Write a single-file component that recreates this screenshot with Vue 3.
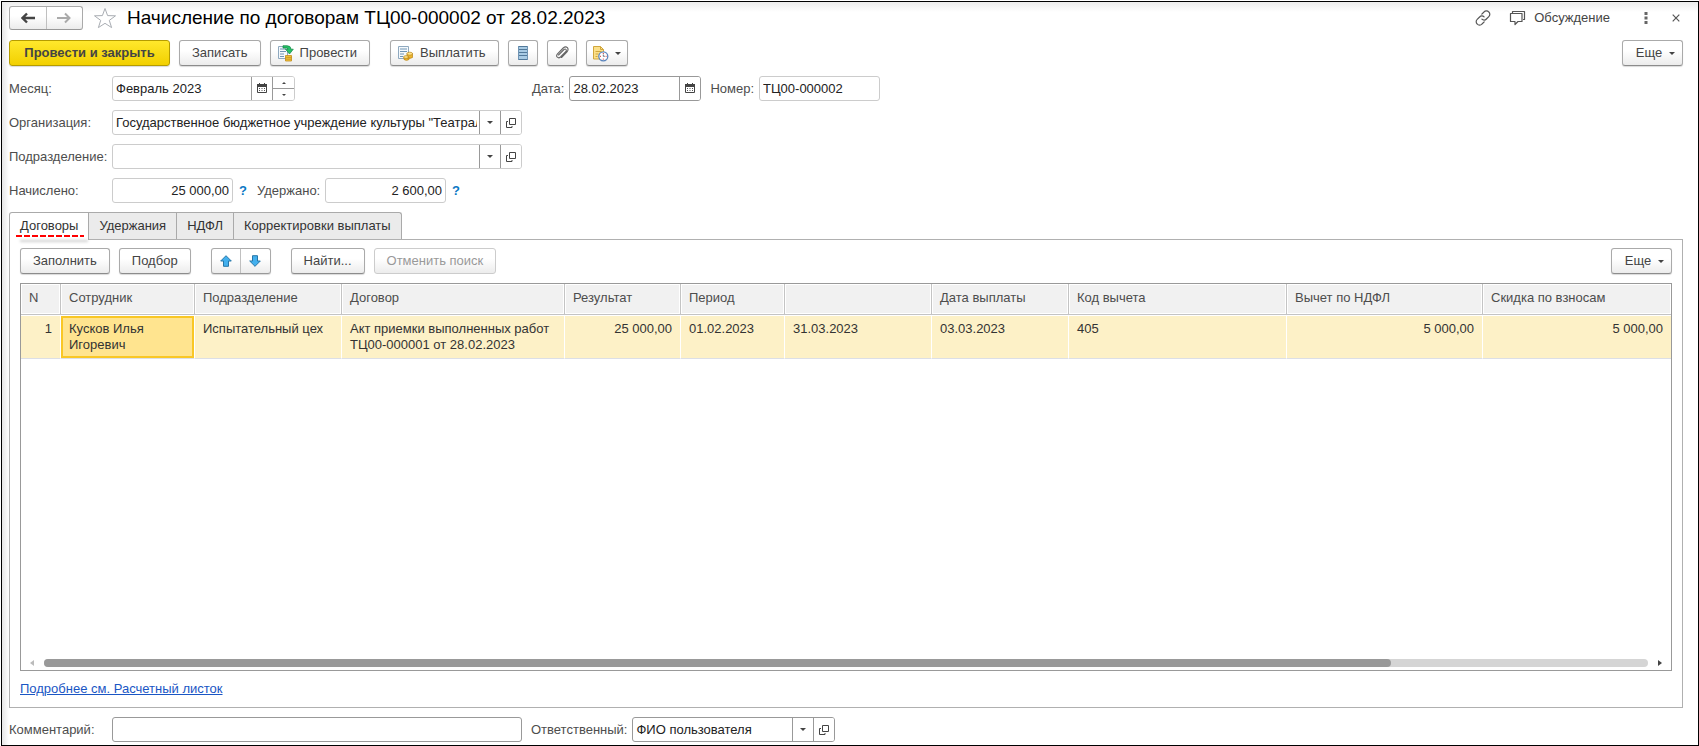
<script setup>
import { ref } from 'vue'

const month = ref('Февраль 2023')
const date = ref('28.02.2023')
const number = ref('ТЦ00-000002')
const organization = ref('Государственное бюджетное учреждение культуры "Театральный центр"')
const department = ref('')
const accrued = ref('25 000,00')
const withheld = ref('2 600,00')
const comment = ref('')
const responsible = ref('ФИО пользователя')

const tabs = ['Договоры', 'Удержания', 'НДФЛ', 'Корректировки выплаты']
const activeTab = ref('Договоры')

const columns = [
  { title: 'N', width: 40, num: true },
  { title: 'Сотрудник', width: 134 },
  { title: 'Подразделение', width: 147 },
  { title: 'Договор', width: 223 },
  { title: 'Результат', width: 116, num: true },
  { title: 'Период', width: 104 },
  { title: '', width: 147 },
  { title: 'Дата выплаты', width: 137 },
  { title: 'Код вычета', width: 218 },
  { title: 'Вычет по НДФЛ', width: 196, num: true },
  { title: 'Скидка по взносам', width: 188, num: true }
]

const rows = [
  ['1', 'Кусков Илья Игоревич', 'Испытательный цех', 'Акт приемки выполненных работ ТЦ00-000001 от 28.02.2023',
    '25 000,00', '01.02.2023', '31.03.2023', '03.03.2023', '405', '5 000,00', '5 000,00']
]

const scroll = { size: 84 }
</script>

<template>
  <div class="page">
    <main class="window">
      <header class="titlebar">
        <div class="pair nav">
          <button type="button" aria-label="Назад">
            <svg width="14" height="12" viewBox="0 0 14 12"><path d="M6 1.5 1.5 6 6 10.5M2 6h12" fill="none" stroke="#444" stroke-width="2.4" /></svg>
          </button>
          <button type="button" aria-label="Вперед">
            <svg width="14" height="12" viewBox="0 0 14 12"><path d="M8 1.5 12.5 6 8 10.5M12 6H0" fill="none" stroke="#aaa" stroke-width="2" /></svg>
          </button>
        </div>
        <button type="button" class="bare star" aria-label="В избранное">
          <svg width="24" height="22" viewBox="0 0 24 22"><path d="M12 1.5 14.6 8.6 22.5 8.8 16.3 13.4 18.6 20.6 12 16.3 5.4 20.6 7.7 13.4 1.5 8.8 9.4 8.6Z" fill="#fff" stroke="#a9adb3" /></svg>
        </button>
        <h1>Начисление по договорам ТЦ00-000002 от 28.02.2023</h1>
        <div class="tools">
          <button type="button" class="bare" aria-label="Ссылка">
            <svg width="16" height="16" viewBox="0 0 16 16"><g fill="none" stroke="#555" stroke-width="1.2" stroke-linecap="round"><path d="M6.8 4.2 9 2a3 3 0 0 1 4.8 0 3.1 3.1 0 0 1 0 4.6L11.4 9a3 3 0 0 1-4.5.1" /><path d="M9.2 11.8 7 14a3 3 0 0 1-4.8 0 3.1 3.1 0 0 1 0-4.6L4.6 7a3 3 0 0 1 4.5-.1" /></g></svg>
          </button>
          <button type="button" class="bare discuss">
            <svg width="17" height="16" viewBox="0 0 17 16"><path d="M3.500 3V1.500h12v8H14M1.500 3.500h11.500v8H9L6 14.500v-3H1.500z" fill="none" stroke="#555" stroke-width="1.2" stroke-linejoin="round" /></svg>
            <span>Обсуждение</span>
          </button>
          <button type="button" class="bare dots" aria-label="Меню">
            <svg width="4" height="12" viewBox="0 0 4 12"><path d="M.5 0h3v3h-3zM.5 4.500h3v3h-3zM.5 9h3v3h-3z" fill="#666" /></svg>
          </button>
          <button type="button" class="bare" aria-label="Закрыть">
            <svg width="8" height="8" viewBox="0 0 8 8"><path d="m.7.7 6.600 6.600M7.300.7.700 7.300" stroke="#555" stroke-width="1.2" /></svg>
          </button>
        </div>
      </header>

      <div class="toolbar">
        <button type="button" class="btn primary">Провести и закрыть</button>
        <button type="button" class="btn">Записать</button>
        <button type="button" class="btn withicon">
          <svg width="17" height="17" viewBox="0 0 17 17"><path d="M1.500 1.500h9v12h-9z" fill="#f5f9fc" stroke="#8fa9bf" /><path d="M3 4h6M3 6.500h6M3 9h4M3 11.500h4" stroke="#6f94b4" /><path d="M6 .7h4q4 0 4 3.500h2.300L12.500 9 8.500 4.200H11Q11 3 9.500 3H6z" fill="#25c168" stroke="#128544" stroke-width=".7" /><path d="M8.500 10.500h6v5.500h-6z" fill="#f4c63d" stroke="#c08c1b" stroke-width=".8" /><path d="M8.500 12.300h6M8.500 14.200h6" stroke="#c08c1b" stroke-width=".8" /></svg>
          <span>Провести</span>
        </button>
        <button type="button" class="btn withicon group">
          <svg width="17" height="17" viewBox="0 0 17 17"><path d="M1.500 1.500h10v12h-10z" fill="#f5f9fc" stroke="#8fa9bf" /><path d="M3 4h7M3 6.500h7M3 9h4M3 11.500h3" stroke="#6f94b4" /><path d="M7 12v2.500q2.500 1.700 5 0V12zM10 8.500V13q3 1 5.500-.5v-4z" fill="#edb52d" stroke="#b98212" stroke-width=".7" /><ellipse cx="12.7" cy="8.7" rx="2.8" ry="1.5" fill="#ffe58a" stroke="#b98212" stroke-width=".7" /><ellipse cx="9" cy="12" rx="2.5" ry="1.3" fill="#ffe58a" stroke="#b98212" stroke-width=".7" /></svg>
          <span>Выплатить</span>
        </button>
        <button type="button" class="btn square" aria-label="Реестр">
          <svg width="12" height="16" viewBox="0 0 12 16"><path d="M1 1h10v14H1z" fill="#a9cbe4" /><path d="M1 1.500h10M1 4.500h10M1 7.500h10M1 10.500h10M1 14.500h10" stroke="#52799a" stroke-width="1.2" /><path d="M1.500 1v14M10.500 1v14" stroke="#6f94b4" /></svg>
        </button>
        <button type="button" class="btn square" aria-label="Файлы">
          <svg width="14" height="14" viewBox="0 0 14 14"><path d="M3.500 9 9 3.500q1.300-1 2 0t0 2L5.500 11q-1.700 1.500-3.200.2-1.500-1.500.2-3.400L8.200 2q2.400-2 4.200-.3 1.500 1.900-.4 4.100L6.500 11.500" fill="none" stroke="#666" stroke-width="1.1" stroke-linecap="round" /></svg>
        </button>
        <button type="button" class="btn drop" aria-label="Отложенные действия">
          <svg width="17" height="17" viewBox="0 0 17 17"><path d="M1.500 1.500h7l3 3v9.500h-10z" fill="#fbe08a" stroke="#d0a63c" /><path d="M8.500 1.500v3h3M3.500 6.500h6M3.500 9h3M3.500 11.500h2" fill="none" stroke="#d0a63c" /><circle cx="11.3" cy="11.3" r="4.5" fill="#fff" stroke="#5b85bd" stroke-width="1.3" /><path d="M11.300 8v1M11.300 13.600v1M8 11.300h1M13.600 11.300h1" stroke="#d33" /><path d="M11.300 11.300V9.500M11.300 11.300h1.500" stroke="#456" stroke-width=".8" /></svg>
          <i class="caret"></i>
        </button>
        <button type="button" class="btn more">Еще <i class="caret"></i></button>
      </div>

      <form class="fields" @submit.prevent>
        <div class="line">
          <div class="half">
            <label for="month">Месяц:</label>
            <div class="box month">
              <input id="month" v-model="month" type="text">
              <button type="button" class="cell" aria-label="Календарь">
                <svg width="10" height="11" viewBox="0 0 10 11"><path d="M.5 2.500h9v7h-9z" fill="#fff" stroke="#444" /><path d="M0 1h10v3H0zM2 0h1v2H2zM7 0h1v2H7z" fill="#444" /><path d="M2 5.500h6M2 7.500h6" stroke="#555" stroke-dasharray="1 1.500" /></svg>
              </button>
              <div class="spin">
                <button type="button" aria-label="Больше"><i class="tiny up"></i></button>
                <button type="button" aria-label="Меньше"><i class="tiny"></i></button>
              </div>
            </div>
          </div>
          <label for="date" class="auto">Дата:</label>
          <div class="box dark date">
            <input id="date" v-model="date" type="text">
            <button type="button" class="cell" aria-label="Календарь">
              <svg width="10" height="11" viewBox="0 0 10 11"><path d="M.5 2.500h9v7h-9z" fill="#fff" stroke="#444" /><path d="M0 1h10v3H0zM2 0h1v2H2zM7 0h1v2H7z" fill="#444" /><path d="M2 5.500h6M2 7.500h6" stroke="#555" stroke-dasharray="1 1.500" /></svg>
            </button>
          </div>
          <label for="number" class="auto second">Номер:</label>
          <div class="box amount"><input id="number" v-model="number" type="text"></div>
        </div>

        <div class="line">
          <label for="org">Организация:</label>
          <div class="box wide">
            <input id="org" v-model="organization" type="text">
            <button type="button" class="cell" aria-label="Выбрать"><i class="caret"></i></button>
            <button type="button" class="cell" aria-label="Открыть">
              <svg width="10" height="10" viewBox="0 0 10 10"><path d="M3.500.5h6v6h-6zM2 3.500H.5v6h5.500V8" fill="none" stroke="#444" /></svg>
            </button>
          </div>
        </div>

        <div class="line">
          <label for="dept">Подразделение:</label>
          <div class="box wide">
            <input id="dept" v-model="department" type="text">
            <button type="button" class="cell" aria-label="Выбрать"><i class="caret"></i></button>
            <button type="button" class="cell" aria-label="Открыть">
              <svg width="10" height="10" viewBox="0 0 10 10"><path d="M3.500.5h6v6h-6zM2 3.500H.5v6h5.500V8" fill="none" stroke="#444" /></svg>
            </button>
          </div>
        </div>

        <div class="line">
          <label for="accrued">Начислено:</label>
          <div class="box amount"><input id="accrued" v-model="accrued" class="right" type="text"></div>
          <button type="button" class="bare help">?</button>
          <label for="withheld" class="held">Удержано:</label>
          <div class="box amount"><input id="withheld" v-model="withheld" class="right" type="text"></div>
          <button type="button" class="bare help">?</button>
        </div>
      </form>

      <nav class="tabs" role="tablist">
        <button
          v-for="tab in tabs" :key="tab" type="button" role="tab" class="tab"
          :class="{ active: tab === activeTab }" :aria-selected="tab === activeTab" @click="activeTab = tab"
        >{{ tab }}</button>
      </nav>

      <section class="panel">
        <div class="toolbar">
          <button type="button" class="btn">Заполнить</button>
          <button type="button" class="btn">Подбор</button>
          <div class="pair move">
            <button type="button" aria-label="Вверх">
              <svg width="12" height="12" viewBox="0 0 12 12"><path d="M6 .7 11.300 6H8.500v5.300h-5V6H.7z" fill="#43b0ee" stroke="#2777a8" /></svg>
            </button>
            <button type="button" aria-label="Вниз">
              <svg width="12" height="12" viewBox="0 0 12 12"><path d="M6 11.300 11.300 6H8.500V.7h-5V6H.7z" fill="#43b0ee" stroke="#2777a8" /></svg>
            </button>
          </div>
          <button type="button" class="btn">Найти...</button>
          <button type="button" class="btn" disabled>Отменить поиск</button>
          <button type="button" class="btn more">Еще <i class="caret"></i></button>
        </div>

        <div class="grid">
          <table>
            <colgroup>
              <col v-for="(c, i) in columns" :key="i" :style="{ width: c.width + 'px' }">
            </colgroup>
            <thead>
              <tr><th v-for="(c, i) in columns" :key="i" scope="col">{{ c.title }}</th></tr>
            </thead>
            <tbody>
              <tr v-for="row in rows" :key="row[0]">
                <td v-for="(v, i) in row" :key="i" :class="{ right: columns[i].num, current: i === 1 }">{{ v }}</td>
              </tr>
            </tbody>
          </table>
          <div class="scroll">
            <i class="arrow left"></i>
            <div class="track"><div class="thumb" :style="{ width: scroll.size + '%' }"></div></div>
            <i class="arrow"></i>
          </div>
        </div>

        <a href="#payslip" class="link">Подробнее см. Расчетный листок</a>
      </section>

      <footer class="line bottom">
        <label for="comment">Комментарий:</label>
        <div class="box dark wide"><input id="comment" v-model="comment" type="text"></div>
        <label for="resp" class="auto second">Ответственный:</label>
        <div class="box dark person">
          <input id="resp" v-model="responsible" type="text">
          <button type="button" class="cell" aria-label="Выбрать"><i class="caret"></i></button>
          <button type="button" class="cell" aria-label="Открыть">
            <svg width="10" height="10" viewBox="0 0 10 10"><path d="M3.500.5h6v6h-6zM2 3.500H.5v6h5.500V8" fill="none" stroke="#444" /></svg>
          </button>
        </div>
      </footer>
    </main>
  </div>
</template>

<style>
body { background: #fff; }
</style>

<style scoped>
.page {
  box-sizing: border-box;
  min-height: 100vh;
  padding: 1px 0 0 1px;
  display: flex;
  font: 13px/16px "Liberation Sans", Arial, sans-serif;
  color: #333;
}
.page *, .page *::after { box-sizing: border-box; }
button, input { font: inherit; color: inherit; margin: 0; }
button { padding: 0; }
svg { display: block; flex: none; }

.window {
  flex: 1;
  min-width: 0;
  display: flex;
  flex-direction: column;
  border: 1px solid #000;
  padding: 4px 15px 3px 7px;
  background:
    linear-gradient(to bottom, #ececec, rgba(255, 255, 255, 0) 10px),
    linear-gradient(to right, #e6e6e6, #fff 7px);
}

.titlebar { display: flex; align-items: center; height: 24px; }
.titlebar h1 { margin: 0 0 0 10px; font-size: 19px; line-height: 24px; font-weight: 400; color: #000; white-space: nowrap; }
.bare { border: 0; background: none; display: flex; align-items: center; }
.star { margin-left: 10px; }
.tools { margin-left: auto; display: flex; align-items: center; padding-right: 3px; color: #444; }
.discuss { gap: 8px; margin-left: 18px; }
.dots { margin: 0 24px 0 34px; }

.pair { display: flex; border: 1px solid #aaa; border-bottom-color: #999; border-radius: 3px; background: linear-gradient(#fff 40%, #ececec); }
.pair button { flex: 1; display: flex; align-items: center; justify-content: center; border: 0; background: none; }
.pair button + button { border-left: 1px solid #c0c0c0; }
.nav { width: 74px; height: 24px; }
.move { width: 60px; height: 26px; margin: 0 11px; box-shadow: 0 1px 1px rgba(0, 0, 0, .15); }

.toolbar { display: flex; gap: 9px; }
.window > .toolbar { margin-top: 10px; }
.btn {
  height: 26px;
  padding: 0 12px;
  border: 1px solid #aaa;
  border-bottom-color: #8c8c8c;
  border-radius: 3px;
  background: linear-gradient(#fff 40%, #ececec);
  box-shadow: 0 1px 1px rgba(0, 0, 0, .15);
  color: #444;
  display: flex;
  align-items: center;
  justify-content: center;
  white-space: nowrap;
}
.btn:disabled { color: #999; border-color: #ccc; box-shadow: none; }
.primary { min-width: 161px; background: linear-gradient(#ffe82c, #f2d000); border-color: #b59c00; font-weight: 700; }
.withicon { padding: 0 12px 0 6px; gap: 6px; }
.group { margin-left: 11px; }
.square { width: 30px; padding: 0; }
.drop { width: 42px; padding: 0; gap: 6px; }
.more { margin-left: auto; width: 61px; padding: 0 0 0 6px; gap: 7px; }

.caret { width: 0; height: 0; border: 3px solid transparent; border-top-color: #444; border-bottom: 0; }
.tiny { width: 0; height: 0; border: 2px solid transparent; border-top-color: #444; border-bottom: 0; }
.tiny.up { border-top: 0; border-bottom: 2px solid #444; }

.fields { display: flex; flex-direction: column; gap: 9px; margin-top: 10px; }
.line { display: flex; align-items: center; }
.line label { width: 103px; flex: none; color: #4d4d4d; white-space: nowrap; }
.line label.auto { width: auto; margin-right: 5px; }
.line label.second { margin-left: 9px; }
.line label.held { width: 68px; }
.half { display: flex; align-items: center; width: 523px; }
.box { display: flex; height: 25px; border: 1px solid #ccc; border-radius: 3px; background: #fff; overflow: hidden; }
.box input { flex: 1; min-width: 0; width: 0; border: 0; outline: 0; background: none; padding: 0 2px 0 3px; color: #222; }
.box input.right { text-align: right; padding-right: 3px; }
.box.dark { border-color: #999; }
.cell { flex: none; width: 21px; border: 0; border-left: 1px solid #999; background: #fff; display: flex; align-items: center; justify-content: center; }
.spin { width: 22px; display: flex; flex-direction: column; border-left: 1px solid #999; }
.spin button { flex: 1; border: 0; background: #fff; display: flex; align-items: center; justify-content: center; }
.spin button + button { border-top: 1px solid #999; }
.month { width: 183px; }
.date { width: 132px; }
.amount { width: 121px; }
.wide { width: 410px; }
.person { width: 203px; }
.help { width: 20px; margin-right: 4px; justify-content: center; color: #0b78c4; font-weight: 700; }

.tabs { display: flex; margin-top: 9px; }
.tab { position: relative; height: 27px; padding: 0 10px; border: 1px solid #aaa; border-bottom: 0; border-left-width: 0; background: #ebebeb; color: #333; white-space: nowrap; }
.tab:first-child { border-left-width: 1px; border-top-left-radius: 3px; }
.tab:last-child { border-top-right-radius: 3px; }
.tab.active { background: #fff; margin-bottom: -1px; height: 28px; padding-bottom: 2px; z-index: 1; }
.tab.active::after {
  content: "";
  position: absolute;
  left: 6px;
  right: 4px;
  bottom: 3px;
  height: 2px;
  background: repeating-linear-gradient(to right, #f00 0 6px, transparent 6px 8px);
  box-shadow: 4px 5px 3px rgba(0, 0, 0, .2);
}

.panel { flex: 1; display: flex; flex-direction: column; border: 1px solid #b0b0b0; padding: 8px 10px 10px; background: #fff; }
.grid { flex: 1; display: flex; flex-direction: column; margin-top: 9px; border: 1px solid #999; background: #fff; }
table { width: 100%; table-layout: fixed; border-collapse: separate; border-spacing: 0; }
th { height: 31px; padding: 0 8px 2px; text-align: left; font-weight: 400; color: #4d4d4d; background: #f1f1f1; border-right: 1px solid #c4c4c4; border-bottom: 1px solid #c4c4c4; box-shadow: inset 0 0 0 1px #fff; white-space: nowrap; }
td { height: 44px; padding: 5px 8px; vertical-align: top; background: #fdf1c7; border-top: 1px solid #fff; border-right: 1px solid #fff; border-bottom: 1px solid #dcdfe6; }
th:last-child, td:last-child { border-right: 0; }
td.right { text-align: right; }
td.current { background: #ffe48f; box-shadow: inset 0 0 0 2px #f9c725; }

.scroll { margin-top: auto; display: flex; align-items: center; padding: 0 9px 3px; }
.track { flex: 1; height: 8px; margin: 0 10px; border-radius: 4px; background: #d5d5d5; }
.thumb { height: 8px; border-radius: 4px; background: #999; }
.arrow { width: 0; height: 0; border: 3px solid transparent; border-left: 4px solid #444; border-right: 0; }
.arrow.left { border-left: 0; border-right: 4px solid #bbb; }

.link { align-self: flex-start; margin-top: 10px; color: #1a56c4; text-decoration: underline; }
.bottom { margin-top: 9px; }
</style>
